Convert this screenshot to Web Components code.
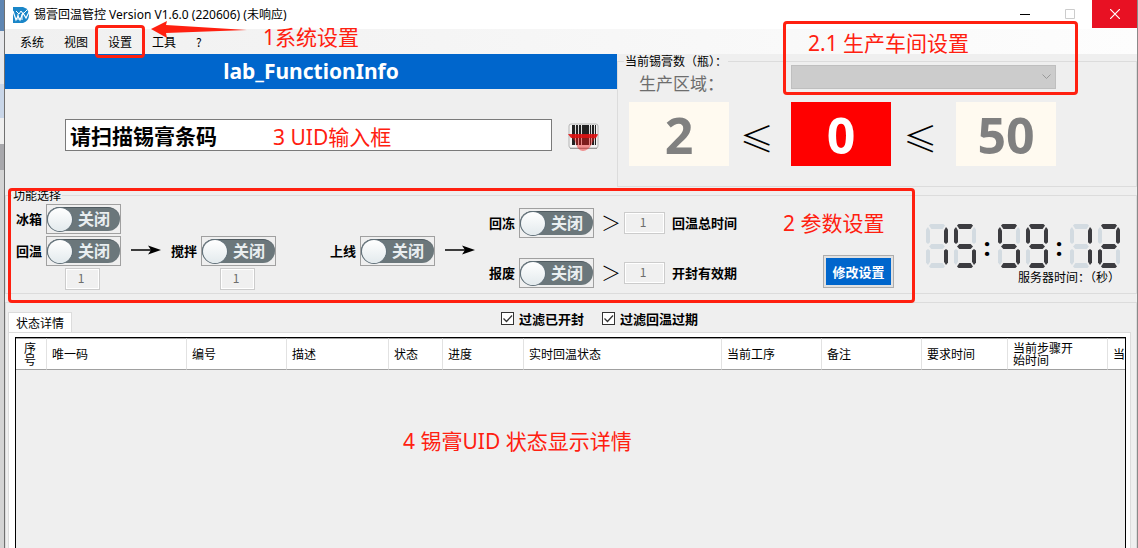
<!DOCTYPE html>
<html lang="zh-CN">
<head>
<meta charset="utf-8">
<title>锡膏回温管控</title>
<style>
    * { box-sizing: border-box; }
    body {
        margin: 0;
        min-height: 100vh;
        display: flex;
        position: relative;
        overflow: hidden;
        background: #efefef;
        color: #000;
        font: 12px/14px "Noto Sans CJK SC", sans-serif;
        --line: #dcdcdc;
        --blue: #0066cc;
        --mark: #ff2010;
    }
    .desktop {
        flex: 0 0 5px;
        border-right: 1px solid #707070;
        background: linear-gradient(#5f86b2 0 31px, #e6e8ec 31px 84px, #c9d6e8 84px 118px, #efefef 118px 144px, #a8a8ac 144px 170px, #d4d4d4 170px);
    }
    app-window { flex: 1; min-width: 0; }
</style>
</head>
<body>
<div class="desktop"></div>
<app-window>
    <title-bar slot="title">锡膏回温管控 Version V1.6.0 (220606) (未响应)</title-bar>
    <menu-bar slot="menu" items="系统,视图,设置,工具,?"></menu-bar>
    <scan-panel slot="scan" heading="lab_FunctionInfo"></scan-panel>
    <stock-panel slot="stock"></stock-panel>
    <function-panel slot="functions"></function-panel>
    <status-panel slot="status"></status-panel>
</app-window>

<mark-box style="left: 95px; top: 25px; width: 50px; height: 33px"></mark-box>
<mark-box style="left: 783px; top: 21px; width: 295px; height: 74px"></mark-box>
<mark-box style="left: 8px; top: 188px; width: 907px; height: 115px"></mark-box>
<mark-arrow style="left: 151px; top: 20px"></mark-arrow>
<mark-text style="left: 263px; top: 23px">1系统设置</mark-text>
<mark-text style="left: 808px; top: 29px">2.1 生产车间设置</mark-text>
<mark-text style="left: 783px; top: 209px">2 参数设置</mark-text>
<mark-text style="left: 273px; top: 123px">3 UID输入框</mark-text>
<mark-text style="left: 403px; top: 427px">4 锡膏UID 状态显示详情</mark-text>

<script>
const reset = '* { box-sizing: border-box; }';

class BaseElement extends HTMLElement {
    constructor() {
        super();
        this.attachShadow({mode: 'open'});
    }
    connectedCallback() {
        this.shadowRoot.innerHTML = `<style>${reset}</style>${this.render()}`;
    }
}

class AppWindow extends BaseElement {
    render() {
        return `
            <style>
                :host { display: flex; flex-direction: column; border-right: 1px solid #8a8a8a; }
                .top {
                    display: grid;
                    grid-template-columns: minmax(0, 1fr) 520px;
                }
                ::slotted([slot='status']) { flex: 1; }
            </style>
            <slot name="title"></slot>
            <slot name="menu"></slot>
            <div class="top">
                <slot name="scan"></slot>
                <slot name="stock"></slot>
            </div>
            <slot name="functions"></slot>
            <slot name="status"></slot>
        `;
    }
}

class TitleBar extends BaseElement {
    render() {
        return `
            <style>
                :host {
                    display: flex;
                    align-items: center;
                    height: 29px;
                    padding-left: 8px;
                    background: white;
                    font-family: "Noto Sans", "Noto Sans CJK SC", sans-serif;
                }
                .logo { margin-right: 5px; }
                .text { flex: 1; white-space: nowrap; }
                button {
                    width: 45px;
                    height: 28px;
                    padding: 0;
                    border: 0;
                    background: none;
                    display: grid;
                    place-items: center;
                    align-self: flex-start;
                }
                .close { background: #e81123; }
                svg { display: block; }
            </style>
            <svg class="logo" width="16" height="16" viewBox="0 0 16 16">
                <path d="M0 0h10q6 2 6 8t-6 8H0z" fill="#1a86c8"/>
                <path d="M0 4l3 9 2-4 2 4 3-7 3 5 3-6" fill="none" stroke="#fff" stroke-width="1.2"/>
                <path d="M3 4l3 3 2-3 2 3 4-4M5 7v6M9 7v6" fill="none" stroke="#fff"/>
            </svg>
            <span class="text"><slot></slot></span>
            <button aria-label="最小化"><svg width="10" height="10"><path d="M0 5.500h10" stroke="#000"/></svg></button>
            <button aria-label="最大化" disabled><svg width="10" height="10"><path d="M.5.5h9v9h-9z" fill="none" stroke="#ccc"/></svg></button>
            <button class="close" aria-label="关闭窗口"><svg width="10" height="10"><path d="M0 0l10 10M10 0L0 10" stroke="#fff" stroke-width="1.2"/></svg></button>
        `;
    }
}

class MenuBar extends BaseElement {
    render() {
        const items = this.getAttribute('items').split(',');
        return `
            <style>
                :host {
                    display: flex;
                    align-items: center;
                    gap: 20px;
                    height: 25px;
                    padding-left: 15px;
                    background: linear-gradient(90deg, #f0f0f0, #fdfdfd);
                }
                button { border: 0; padding: 0; background: none; font: inherit; color: inherit; }
            </style>
            ${items.map(item => `<button>${item}</button>`).join('')}
        `;
    }
}

class ScanPanel extends BaseElement {
    render() {
        return `
            <style>
                :host { display: block; }
                h1 {
                    margin: 0;
                    height: 35px;
                    background: var(--blue);
                    color: white;
                    text-align: center;
                    font: bold 21px/34px "Noto Sans", sans-serif;
                }
                .scan {
                    display: flex;
                    align-items: flex-start;
                    gap: 16px;
                    padding: 30px 18px 0 60px;
                }
                input {
                    flex: 1;
                    min-width: 0;
                    height: 32px;
                    padding: 0 4px;
                    border: 1px solid #7a7a7a;
                    background: white;
                    color: #000;
                    font: bold 21px/28px "Noto Sans CJK SC", sans-serif;
                }
                svg { margin-top: 4px; }
            </style>
            <h1>${this.getAttribute('heading')}</h1>
            <div class="scan">
                <input type="text" aria-label="锡膏条码" value="请扫描锡膏条码">
                <svg width="31" height="29" viewBox="0 0 31 29">
                    <rect x="1" y="1" width="29" height="24" rx="2" fill="#f4f4f4" stroke="#b4b4b4"/>
                    <path d="M2 25.500h27" stroke="#999"/>
                    <path d="M4 3h24v19H4z" fill="#ddd"/>
                    <path d="M4 2h3v20H4zM8 2h2v20H8zM11 2h2v20h-2zM14 2h7v20h-7zM22 2h1v20h-1zM24 2h2v20h-2zM27 2h1v20h-1z" fill="#222"/>
                    <path d="M1 12h29l-4 5q-1 1-2 4-4 7-9 7T8 21q-1-4-3-5z" fill="#f01818" opacity=".45"/>
                    <path d="M0 11h30l-2 4H3z" fill="#e01010" opacity=".85"/>
                </svg>
            </div>
        `;
    }
}

class GroupBox extends BaseElement {
    render() {
        const caption = this.getAttribute('caption');
        return `
            <style>
                :host { display: block; }
                fieldset {
                    height: 100%;
                    min-width: 0;
                    margin: 0;
                    padding: 0;
                    border: 1px solid var(--line);
                }
                legend {
                    margin-left: 6px;
                    padding: 0 1px;
                    font-size: 12px;
                    line-height: 14px;
                }
            </style>
            <fieldset>
                <legend>${caption}</legend>
                <slot></slot>
            </fieldset>
        `;
    }
}

class StockPanel extends BaseElement {
    render() {
        return `
            <style>
                :host { display: block; }
                group-box { height: 133px; }
                .grid {
                    display: grid;
                    grid-template-columns: 100px 62px 100px 65px 100px;
                    grid-template-rows: 24px 64px;
                    row-gap: 13px;
                    margin-top: -3px;
                    padding-left: 11px;
                }
                label {
                    grid-column: span 2;
                    padding: 6px 0 0 10px;
                    color: #6d6d6d;
                    font-size: 17px;
                    line-height: 24px;
                }
                .area {
                    grid-column: span 3;
                    display: grid;
                }
                .area > * { grid-area: 1 / 1; }
                select {
                    appearance: none;
                    border: 1px solid #bfbfbf;
                    border-radius: 0;
                    background: #ccc;
                    opacity: 1;
                }
                .area svg { place-self: center end; margin-right: 5px; }
                output {
                    background: #fffaf0;
                    color: #808080;
                    text-align: center;
                    font: bold 50px/66px "Open Sans", sans-serif;
                }
                .current { background: #f00; color: white; }
                .op {
                    padding-right: 6px;
                    text-align: center;
                    font-size: 34px;
                    font-weight: 300;
                    line-height: 72px;
                }
            </style>
            <group-box caption="当前锡膏数（瓶）：">
                <div class="grid">
                    <label for="area">生产区域：</label>
                    <div class="area">
                        <select id="area" disabled></select>
                        <svg width="9" height="6"><path d="M.5.5l4 4 4-4" fill="none" stroke="#999"/></svg>
                    </div>
                    <output>2</output>
                    <span class="op">≤</span>
                    <output class="current">0</output>
                    <span class="op">≤</span>
                    <output>50</output>
                </div>
            </group-box>
        `;
    }
}

class ToggleSwitch extends BaseElement {
    render() {
        return `
            <style>
                :host { display: block; }
                label {
                    display: flex;
                    align-items: center;
                    gap: 4px;
                    font-size: 13px;
                    font-weight: bold;
                    white-space: nowrap;
                }
                .frame {
                    display: grid;
                    width: 75px;
                    height: 30px;
                    padding: 2px 0;
                    border: 1px solid #a0a0a0;
                }
                .frame > * { grid-area: 1 / 1; }
                input { margin: 0; opacity: 0; }
                .pill {
                    display: flex;
                    align-items: center;
                    gap: 5px;
                    height: 24px;
                    border-radius: 12px;
                    border-top: 1px solid #4f5a60;
                    background: #6b777b;
                    color: #e9eef0;
                    font-size: 16px;
                    font-weight: bold;
                }
                .text { line-height: 18px; padding-bottom: 4px; }
                .pill::before {
                    content: '';
                    width: 24px;
                    height: 23px;
                    border: 1px solid #62717a;
                    border-radius: 50%;
                    background: linear-gradient(#fff, #e3eaed);
                }
            </style>
            <label>
                <span>${this.getAttribute('name')}</span>
                <span class="frame">
                    <input type="checkbox" role="switch">
                    <span class="pill"><span class="text">关闭</span></span>
                </span>
            </label>
        `;
    }
}

class NumberField extends BaseElement {
    render() {
        return `
            <style>
                :host { display: block; width: 35px; }
                input {
                    display: block;
                    width: 100%;
                    height: 22px;
                    padding: 0 3px 3px 0;
                    border: 1px solid #ccc;
                    box-shadow: inset 0 0 0 1px white;
                    background: #f0f0f0;
                    color: #6d6d6d;
                    text-align: center;
                    font: 12px/16px "Noto Sans CJK SC", sans-serif;
                }
            </style>
            <input type="text" value="1" disabled aria-label="${this.getAttribute('name')}">
        `;
    }
}

class FlowArrow extends BaseElement {
    render() {
        return `
            <style>
                :host { display: block; width: 30px; }
                svg { display: block; }
            </style>
            <svg width="30" height="10" viewBox="0 0 30 10">
                <path d="M0 5h22" stroke="#000" stroke-width="1.500"/>
                <path d="M17 0.500L30 5 17 9.500 20 5z"/>
            </svg>
        `;
    }
}

// which of the segments a-g are lit for each digit
const SEGMENTS = {
    0: 'abcdef', 1: 'bc', 2: 'abdeg', 3: 'abcdg', 4: 'bcfg',
    5: 'acdfg', 6: 'acdefg', 7: 'abc', 8: 'abcdefg', 9: 'abcdfg'
};

class LedClock extends BaseElement {
    render() {
        const time = this.getAttribute('time');
        const cells = [...time].map(char => {
            if (char === ':') {
                return '<b>:</b>';
            }
            return `<div class="digit">${[...'abcdefg'].map(s =>
                `<i class="${s}${SEGMENTS[char].includes(s) ? ' on' : ''}"></i>`).join('')}</div>`;
        });
        return `
            <style>
                :host { display: block; }
                .face { display: flex; gap: 6px; }
                .digit {
                    display: grid;
                    grid-template: 5px 15px 5px 14px 5px / 4px 14px 4px;
                }
                i { background: #d3dbe1; }
                i.on { background: #3c3c40; }
                .a, .g, .d { grid-column: 1 / 4; margin: 0 3px; }
                .a { grid-row: 1; clip-path: polygon(0 30%, 10% 0, 90% 0, 100% 30%, 85% 100%, 15% 100%); }
                .g { grid-row: 3; clip-path: polygon(0 50%, 15% 0, 85% 0, 100% 50%, 85% 100%, 15% 100%); }
                .d { grid-row: 5; clip-path: polygon(15% 0, 85% 0, 100% 70%, 90% 100%, 10% 100%, 0 70%); }
                .f, .b { grid-row: 1 / 3; margin-top: 3px; }
                .e, .c { grid-row: 4 / 6; margin-bottom: 3px; }
                .f { grid-column: 1; clip-path: polygon(0 15%, 50% 0, 100% 20%, 100% 90%, 50% 100%, 0 90%); }
                .e { grid-column: 1; clip-path: polygon(0 10%, 50% 0, 100% 10%, 100% 80%, 50% 100%, 0 85%); }
                .b { grid-column: 3; clip-path: polygon(0 20%, 50% 0, 100% 15%, 100% 90%, 50% 100%, 0 90%); }
                .c { grid-column: 3; clip-path: polygon(0 10%, 50% 0, 100% 10%, 100% 85%, 50% 100%, 0 80%); }
                b {
                    width: 10px;
                    text-align: center;
                    font: bold 25px/44px "Open Sans", sans-serif;
                }
            </style>
            <div class="face" role="timer" aria-label="${time}">${cells.join('')}</div>
        `;
    }
}

class FunctionPanel extends BaseElement {
    render() {
        return `
            <style>
                :host { display: block; padding-top: 1px; }
                group-box { height: 106px; }
                .flow {
                    display: flex;
                    align-items: flex-start;
                    gap: 10px;
                    padding: 2px 16px 0 10px;
                }
                .stack { display: grid; gap: 2px; }
                .second { padding-top: 32px; }
                .stack number-field { margin: 0 0 0 49px; }
                flow-arrow { margin-top: 41px; }
                .online { margin-left: 44px; }
                .limits { display: grid; gap: 20px; padding: 4px 0 0 4px; }
                .limit {
                    display: grid;
                    grid-template-columns: 105px 16px 41px auto;
                    align-items: center;
                    column-gap: 7px;
                    font-size: 13px;
                    font-weight: bold;
                    white-space: nowrap;
                }
                .limit number-field { width: 41px; }
                .gt { font-size: 20px; font-weight: 300; line-height: 28px; }
                .edit {
                    width: 71px;
                    height: 33px;
                    margin: 51px 0 0 76px;
                    padding: 0;
                    border: 1px solid #adadad;
                    box-shadow: inset 0 0 0 2px #e1e1e1;
                    background: var(--blue);
                    color: white;
                    white-space: nowrap;
                    font: bold 13px/18px "Noto Sans CJK SC", sans-serif;
                }
                .clock { margin: 20px 0 0 auto; }
                .clock p { margin: 2px 0 0; text-align: right; white-space: nowrap; }
            </style>
            <group-box caption="功能选择">
                <div class="flow">
                    <div class="stack">
                        <toggle-switch name="冰箱"></toggle-switch>
                        <toggle-switch name="回温"></toggle-switch>
                        <number-field name="回温时间"></number-field>
                    </div>
                    <flow-arrow></flow-arrow>
                    <div class="stack second">
                        <toggle-switch name="搅拌"></toggle-switch>
                        <number-field name="搅拌时间"></number-field>
                    </div>
                    <div class="stack second online">
                        <toggle-switch name="上线"></toggle-switch>
                    </div>
                    <flow-arrow></flow-arrow>
                    <div class="limits">
                        <div class="limit">
                            <toggle-switch name="回冻"></toggle-switch>
                            <span class="gt">＞</span>
                            <number-field name="回温总时间"></number-field>
                            <span>回温总时间</span>
                        </div>
                        <div class="limit">
                            <toggle-switch name="报废"></toggle-switch>
                            <span class="gt">＞</span>
                            <number-field name="开封有效期"></number-field>
                            <span>开封有效期</span>
                        </div>
                    </div>
                    <button class="edit">修改设置</button>
                    <div class="clock">
                        <led-clock time="15:59:12"></led-clock>
                        <p>服务器时间：（秒）</p>
                    </div>
                </div>
            </group-box>
        `;
    }
}

class CheckOption extends BaseElement {
    render() {
        return `
            <style>
                :host { display: block; }
                label {
                    display: flex;
                    align-items: center;
                    gap: 5px;
                    font-size: 13px;
                    font-weight: bold;
                    white-space: nowrap;
                }
                .box { display: grid; }
                .box > * { grid-area: 1 / 1; }
                input {
                    appearance: none;
                    width: 13px;
                    height: 13px;
                    margin: 0;
                    border: 1px solid #333;
                    background: white;
                }
                svg { pointer-events: none; }
                input:not(:checked) + svg { visibility: hidden; }
            </style>
            <label>
                <span class="box">
                    <input type="checkbox" checked>
                    <svg width="13" height="13"><path d="M2.500 6.500l3 3 5.500-6" fill="none" stroke="#333" stroke-width="1.300"/></svg>
                </span>
                <slot></slot>
            </label>
        `;
    }
}

const COLUMNS = [
    ['序号', 31], ['唯一码', 140], ['编号', 100], ['描述', 102], ['状态', 54], ['进度', 81],
    ['实时回温状态', 198], ['当前工序', 100], ['备注', 100], ['要求时间', 86], ['当前步骤开始时间', 100], ['当', 100]
];

class DataGrid extends BaseElement {
    render() {
        return `
            <style>
                :host {
                    display: block;
                    overflow: hidden;
                    border: 1px solid #000;
                    border-bottom: 0;
                    background: #efefef;
                }
                table { table-layout: fixed; border-collapse: separate; border-spacing: 0; width: 1192px; }
                th {
                    height: 32px;
                    padding: 0 6px 0 5px;
                    border-top: 1px solid #a0a0a0;
                    border-right: 1px solid #e2e2e2;
                    border-bottom: 1px solid #a0a0a0;
                    background: white;
                    text-align: left;
                    font-weight: normal;
                    font-size: 12px;
                    line-height: 12px;
                }
                th:first-child { padding: 0 8px; }
                th:nth-last-child(2) { padding-right: 30px; }
            </style>
            <table>
                <colgroup>${COLUMNS.map(c => `<col style="width: ${c[1]}px">`).join('')}</colgroup>
                <thead><tr>${COLUMNS.map(c => `<th>${c[0]}</th>`).join('')}</tr></thead>
            </table>
        `;
    }
}

class StatusPanel extends BaseElement {
    render() {
        return `
            <style>
                :host {
                    display: flex;
                    flex-direction: column;
                    margin-top: 8px;
                    padding: 9px 5px 0 2px;
                    border: 1px solid var(--line);
                    border-bottom: 0;
                }
                .strip { display: flex; align-items: flex-start; }
                .tab {
                    height: 21px;
                    margin-bottom: -1px;
                    padding: 0 7px;
                    border: 1px solid var(--line);
                    border-bottom: 0;
                    background: white;
                    color: inherit;
                    font: inherit;
                    line-height: 18px;
                }
                .filters { display: flex; gap: 18px; margin-left: 429px; line-height: 12px; }
                .page {
                    flex: 1;
                    display: flex;
                    flex-direction: column;
                    padding: 4px 4px 0 6px;
                    border: 1px solid var(--line);
                    border-bottom: 0;
                    background: white;
                }
                data-grid { flex: 1; }
            </style>
            <div class="strip">
                <button class="tab" role="tab" aria-selected="true">状态详情</button>
                <div class="filters">
                    <check-option>过滤已开封</check-option>
                    <check-option>过滤回温过期</check-option>
                </div>
            </div>
            <div class="page"><data-grid></data-grid></div>
        `;
    }
}

class MarkBox extends BaseElement {
    render() {
        return `
            <style>
                :host {
                    position: absolute;
                    box-sizing: border-box;
                    border: 3px solid var(--mark);
                    border-radius: 4px;
                    pointer-events: none;
                }
            </style>
        `;
    }
}

class MarkArrow extends BaseElement {
    render() {
        return `
            <style>
                :host { position: absolute; pointer-events: none; }
                svg { display: block; fill: var(--mark); }
            </style>
            <svg width="97" height="18" viewBox="0 0 97 18">
                <path d="M0 9L16 1 15 5 96 10 15 13 16 18z"/>
            </svg>
        `;
    }
}

class MarkText extends BaseElement {
    render() {
        return `
            <style>
                :host {
                    position: absolute;
                    color: var(--mark);
                    white-space: nowrap;
                    pointer-events: none;
                    font: 21px/28px "Noto Sans", "Noto Sans CJK SC", sans-serif;
                }
            </style>
            <slot></slot>
        `;
    }
}

customElements.define('group-box', GroupBox);
customElements.define('toggle-switch', ToggleSwitch);
customElements.define('number-field', NumberField);
customElements.define('flow-arrow', FlowArrow);
customElements.define('led-clock', LedClock);
customElements.define('check-option', CheckOption);
customElements.define('data-grid', DataGrid);
customElements.define('title-bar', TitleBar);
customElements.define('menu-bar', MenuBar);
customElements.define('scan-panel', ScanPanel);
customElements.define('stock-panel', StockPanel);
customElements.define('function-panel', FunctionPanel);
customElements.define('status-panel', StatusPanel);
customElements.define('app-window', AppWindow);
customElements.define('mark-box', MarkBox);
customElements.define('mark-arrow', MarkArrow);
customElements.define('mark-text', MarkText);
</script>
</body>
</html>
